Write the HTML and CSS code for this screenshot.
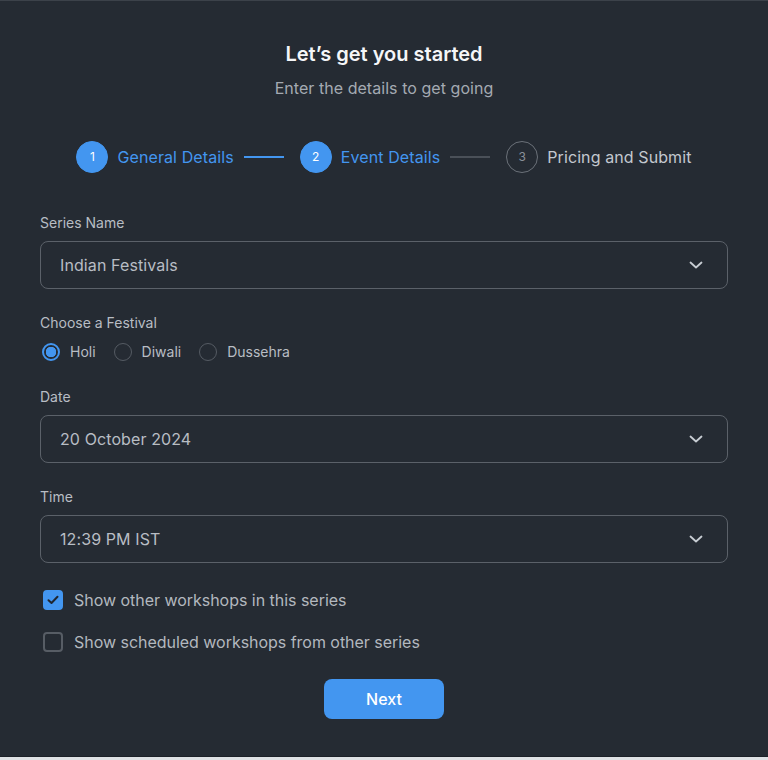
FILE: index.html
```html
<!DOCTYPE html>
<html lang="en">
<head>
<meta charset="utf-8">
<title>Let's get you started</title>
<link rel="stylesheet" href="styles.css">
</head>
<body>
<div class="card">
  <h1 class="title">Let’s get you started</h1>
  <p class="subtitle">Enter the details to get going</p>

  <div class="stepper">
    <div class="step active"><span class="num">1</span><span class="step-label">General Details</span></div>
    <span class="connector active"></span>
    <div class="step active"><span class="num">2</span><span class="step-label">Event Details</span></div>
    <span class="connector"></span>
    <div class="step"><span class="num">3</span><span class="step-label">Pricing and Submit</span></div>
  </div>

  <form class="form">
    <div class="field">
      <label class="label">Series Name</label>
      <div class="select"><span>Indian Festivals</span>
        <svg class="chev" width="14" height="8" viewBox="0 0 14 8"><path d="M1.5 1.5 L7 6.5 L12.5 1.5" fill="none" stroke="currentColor" stroke-width="1.8" stroke-linecap="round" stroke-linejoin="round"/></svg>
      </div>
    </div>

    <div class="field radio-field">
      <label class="label">Choose a Festival</label>
      <div class="radios">
        <span class="radio checked"><span class="dot"></span>Holi</span>
        <span class="radio"><span class="dot"></span>Diwali</span>
        <span class="radio"><span class="dot"></span>Dussehra</span>
      </div>
    </div>

    <div class="field">
      <label class="label">Date</label>
      <div class="select"><span>20 October 2024</span>
        <svg class="chev" width="14" height="8" viewBox="0 0 14 8"><path d="M1.5 1.5 L7 6.5 L12.5 1.5" fill="none" stroke="currentColor" stroke-width="1.8" stroke-linecap="round" stroke-linejoin="round"/></svg>
      </div>
    </div>

    <div class="field">
      <label class="label">Time</label>
      <div class="select"><span>12:39 PM IST</span>
        <svg class="chev" width="14" height="8" viewBox="0 0 14 8"><path d="M1.5 1.5 L7 6.5 L12.5 1.5" fill="none" stroke="currentColor" stroke-width="1.8" stroke-linecap="round" stroke-linejoin="round"/></svg>
      </div>
    </div>

    <div class="checks">
      <span class="check checked"><span class="box"><svg width="12" height="10" viewBox="0 0 12 10"><path d="M1.5 5.2 L4.5 8 L10.5 1.8" fill="none" stroke="#1f2630" stroke-width="2" stroke-linecap="round" stroke-linejoin="round"/></svg></span>Show other workshops in this series</span>
      <span class="check"><span class="box"></span>Show scheduled workshops from other series</span>
    </div>

    <div class="actions"><button type="button" class="next">Next</button></div>
  </form>
</div>
</body>
</html>
```

FILE: styles.css
```css
* { box-sizing: border-box; }
html, body { margin: 0; padding: 0; }
body {
  background: #dfe2e5;
  font-family: Inter, "Noto Sans", "Liberation Sans", sans-serif;
  color: #b8bdc4;
}
.card {
  width: 768px;
  height: 757px;
  background: #252b33;
  border-top: 1px solid #3c424a;
  border-bottom: 1px solid #1c2128;
  padding: 39px 40px 0;
}
.title {
  margin: 0;
  font-size: 20px;
  line-height: 28px;
  font-weight: 600;
  color: #f5f6f8;
  text-align: center;
}
.subtitle {
  margin: 8px 0 0;
  font-size: 16px;
  line-height: 24px;
  color: #a4aab2;
  text-align: center;
  letter-spacing: 0.05px;
}
.stepper {
  margin-top: 41px;
  display: flex;
  justify-content: center;
  align-items: center;
  height: 32px;
}
.step {
  display: flex;
  align-items: center;
  gap: 9px;
  font-size: 16px;
  line-height: 24px;
  color: #c3c8cf;
  letter-spacing: 0.1px;
}
.step .num {
  width: 32px;
  height: 32px;
  border-radius: 50%;
  border: 1px solid #6b7179;
  display: flex;
  align-items: center;
  justify-content: center;
  font-size: 12px;
  color: #8b9199;
}
.step.active { color: #4396f0; }
.step.active .num {
  background: #4396f0;
  border-color: #4396f0;
  color: #ffffff;
}
.connector {
  width: 40px;
  height: 2px;
  background: #4a5058;
  margin: 0 16px 0 10px;
}
.connector.active { background: #4396f0; }

.form {
  margin-top: 40px;
  display: flex;
  flex-direction: column;
}
.field { display: flex; flex-direction: column; gap: 8px; margin-bottom: 24px; }
.label {
  font-size: 14px;
  line-height: 20px;
  color: #b8bdc4;
}
.select {
  height: 48px;
  border: 1px solid #5b6169;
  border-radius: 8px;
  padding: 0 24px 0 19px;
  display: flex;
  align-items: center;
  justify-content: space-between;
  font-size: 16px;
  color: #b8bdc4;
  letter-spacing: 0.1px;
}
.chev { color: #c8cdd3; }

.radio-field { gap: 9px; margin-bottom: 25px; }
.radios { display: flex; align-items: center; gap: 18px; height: 20px; }
.radio {
  display: flex;
  align-items: center;
  gap: 10px;
  font-size: 14px;
  line-height: 20px;
  color: #b8bdc4;
}
.radio:first-child { margin-left: 2px; }
.radio .dot {
  width: 18px;
  height: 18px;
  border-radius: 50%;
  border: 1.5px solid #555b63;
}
.radio.checked .dot {
  border: 2px solid #4396f0;
  background: radial-gradient(circle, #4396f0 0 5px, #252b33 5.5px);
}

.checks {
  margin-top: 1px;
  display: flex;
  flex-direction: column;
  gap: 18px;
}
.check {
  display: flex;
  align-items: center;
  gap: 11px;
  font-size: 16px;
  line-height: 24px;
  color: #b3b8bf;
  padding-left: 3px;
  letter-spacing: -0.03px;
}
.check .box {
  width: 20px;
  height: 20px;
  border-radius: 4px;
  border: 2px solid #575d65;
  display: flex;
  align-items: center;
  justify-content: center;
}
.check.checked .box { background: #4396f0; border-color: #4396f0; }

.actions { display: flex; justify-content: center; margin-top: 25px; }
.next {
  width: 120px;
  height: 40px;
  border: none;
  border-radius: 8px;
  background: #4396f0;
  color: #ffffff;
  font-family: inherit;
  font-size: 16px;
  font-weight: 500;
}
```
